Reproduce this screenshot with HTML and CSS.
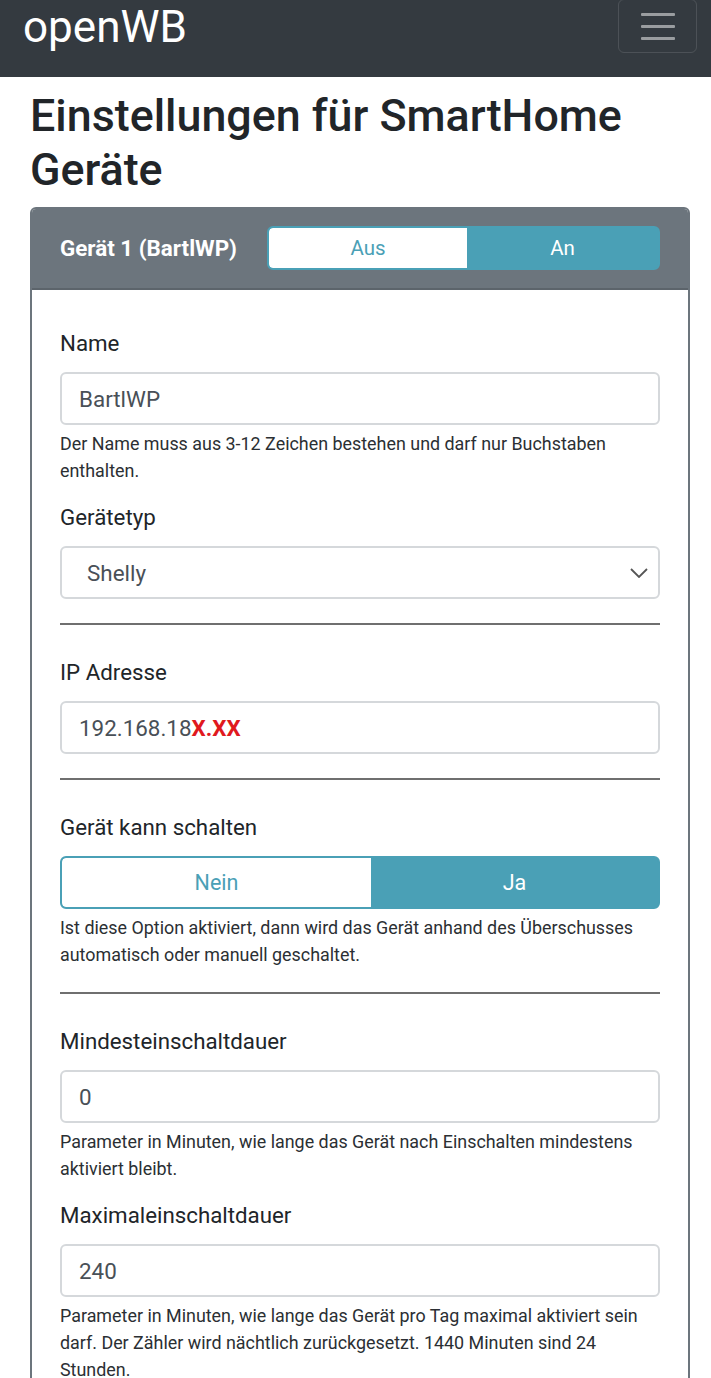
FILE: index.html
```html
<!DOCTYPE html>
<html lang="de">
<head>
<meta charset="utf-8">
<title>openWB SmartHome</title>
<link rel="stylesheet" href="styles.css">
</head>
<body>
<nav class="navbar">
  <span class="brand">openWB</span>
  <button class="toggler" type="button" aria-label="Menü">
    <span class="bar"></span><span class="bar"></span><span class="bar"></span>
  </button>
</nav>
<main class="page">
  <h1 class="title">Einstellungen für SmartHome Geräte</h1>
  <section class="card">
    <header class="card-header">
      <span class="card-title">Gerät 1 (BartlWP)</span>
      <div class="btn-group header-group">
        <span class="btn btn-off">Aus</span>
        <span class="btn btn-on">An</span>
      </div>
    </header>
    <div class="card-body">
      <div class="group">
        <label class="label">Name</label>
        <div class="input">BartlWP</div>
        <p class="help">Der Name muss aus 3-12 Zeichen bestehen und darf nur Buchstaben enthalten.</p>
      </div>
      <div class="group">
        <label class="label">Gerätetyp</label>
        <div class="input select"><span>Shelly</span>
          <svg class="chevron" width="18" height="10" viewBox="0 0 18 10"><path d="M1 1 L9 9 L17 1" fill="none" stroke="#555" stroke-width="1.8"/></svg>
        </div>
      </div>
      <hr class="divider">
      <div class="group">
        <label class="label">IP Adresse</label>
        <div class="input">192.168.18<span class="mask">X.XX</span></div>
      </div>
      <hr class="divider">
      <div class="group">
        <label class="label">Gerät kann schalten</label>
        <div class="btn-group body-group">
          <span class="btn btn-off btn-nein">Nein</span>
          <span class="btn btn-on">Ja</span>
        </div>
        <p class="help">Ist diese Option aktiviert, dann wird das Gerät anhand des Überschusses automatisch oder manuell geschaltet.</p>
      </div>
      <hr class="divider">
      <div class="group">
        <label class="label">Mindesteinschaltdauer</label>
        <div class="input">0</div>
        <p class="help">Parameter in Minuten, wie lange das Gerät nach Einschalten mindestens aktiviert bleibt.</p>
      </div>
      <div class="group">
        <label class="label">Maximaleinschaltdauer</label>
        <div class="input">240</div>
        <p class="help">Parameter in Minuten, wie lange das Gerät pro Tag maximal aktiviert sein darf. Der Zähler wird nächtlich zurückgesetzt. 1440 Minuten sind 24 Stunden.</p>
      </div>
    </div>
  </section>
</main>
</body>
</html>
```

FILE: styles.css
```css
* { box-sizing: border-box; }
html, body { margin: 0; padding: 0; }
body {
  font-family: Roboto, "Liberation Sans", Arial, sans-serif;
  color: #212529;
  background: #fff;
  overflow: hidden;
}

.navbar {
  background: #343a40;
  height: 77px;
  display: flex;
  justify-content: space-between;
  align-items: flex-start;
  padding: 0 14px 0 23px;
}
.brand {
  color: #fff;
  font-size: 44px;
  line-height: 50px;
  margin-top: 2px;
  font-weight: 400;
}
.toggler {
  width: 79px;
  height: 54px;
  margin-top: -1px;
  background: transparent;
  border: 1px solid rgba(255,255,255,0.12);
  border-radius: 6px;
  display: flex;
  flex-direction: column;
  align-items: center;
  justify-content: center;
  gap: 9px;
  padding: 0;
}
.toggler .bar {
  display: block;
  width: 34px;
  height: 3px;
  background: rgba(255,255,255,0.5);
  border-radius: 1px;
}

.page {
  padding: 0 21px 0 30px;
}
.title {
  font-size: 44.8px;
  font-weight: 500;
  line-height: 54px;
  margin: 12px 0 10px;
  color: #212529;
}

.card {
  border: 2px solid #6c757d;
  border-radius: 6px;
  overflow: hidden;
}
.card-header {
  background: #6c757d;
  border-bottom: 2px solid #5c646b;
  padding: 17px 28px 18px;
  display: flex;
  align-items: center;
  justify-content: space-between;
}
.card-title {
  color: #fff;
  font-weight: 700;
  font-size: 22.4px;
}

.btn-group {
  display: flex;
  border-radius: 6px;
  overflow: hidden;
  background: #4aa0b6;
}
.header-group {
  width: 393px;
  height: 44px;
  border: 2px solid #4aa0b6;
}
.body-group {
  height: 53px;
  border: 2px solid #4aa0b6;
}
.btn {
  display: flex;
  align-items: center;
  justify-content: center;
  font-size: 20.5px;
  flex: 1;
}
.body-group .btn { font-size: 21.5px; }
.btn-off {
  background: #fff;
  color: #4aa0b6;
  border-radius: 4px 0 0 4px;
}
.header-group .btn-off { flex: 0 0 198px; }
.btn-nein { flex: 0 0 309px; }
.btn-on {
  background: #4aa0b6;
  color: #fff;
}

.card-body {
  padding: 37px 28px 40px;
}
.group + .group { margin-top: 17px; }
.label {
  display: block;
  font-size: 22.3px;
  line-height: 33px;
  margin-bottom: 12px;
}
.input {
  height: 53px;
  border: 2px solid #d5d8db;
  border-radius: 6px;
  padding: 0 17px;
  display: flex;
  align-items: center;
  font-size: 22.4px;
  color: #495057;
}
.select {
  justify-content: space-between;
  padding: 0 10px 0 25px;
}
.mask {
  color: #e0191e;
  font-weight: 700;
}
.help {
  margin: 5px 0 0;
  font-size: 17.9px;
  line-height: 27px;
  color: #2b2f33;
}
.divider {
  border: 0;
  height: 2px;
  background: #6f6f6f;
  margin: 24px 0 31px;
}
```
